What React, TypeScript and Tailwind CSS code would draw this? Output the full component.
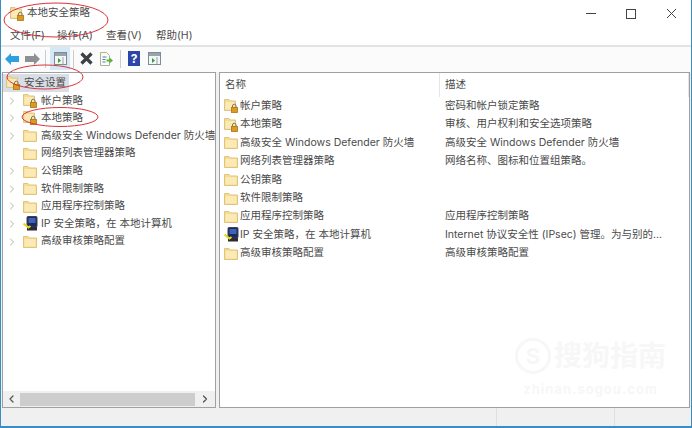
import { ChevronRight, ChevronLeft } from "lucide-react"

interface Item {
  name: string
  desc?: string
  icon: "folder" | "lock" | "ip"
  arrow?: boolean
}

const items: Item[] = [
  { name: "帐户策略", desc: "密码和帐户锁定策略", icon: "lock", arrow: true },
  { name: "本地策略", desc: "审核、用户权利和安全选项策略", icon: "lock", arrow: true },
  { name: "高级安全 Windows Defender 防火墙", desc: "高级安全 Windows Defender 防火墙", icon: "folder", arrow: true },
  { name: "网络列表管理器策略", desc: "网络名称、图标和位置组策略。", icon: "folder" },
  { name: "公钥策略", icon: "folder", arrow: true },
  { name: "软件限制策略", icon: "folder", arrow: true },
  { name: "应用程序控制策略", desc: "应用程序控制策略", icon: "folder", arrow: true },
  { name: "IP 安全策略，在 本地计算机", desc: "Internet 协议安全性 (IPsec) 管理。为与别的...", icon: "ip", arrow: true },
  { name: "高级审核策略配置", desc: "高级审核策略配置", icon: "folder", arrow: true },
]

const font = "font-['Inter','Noto_Sans_CJK_SC',sans-serif]"

function Folder() {
  return (
    <svg width="14" height="13" viewBox="0 0 14 13" className="shrink-0">
      <path d="M0.500 1.500h4.500l1.500 1.500h7v9.500h-13z" fill="#f6dc8e" stroke="#e0c47c" />
      <rect x="1.500" y="4" width="11" height="7.500" fill="#fbeab5" />
    </svg>
  )
}

function LockFolder() {
  return (
    <svg width="15" height="14" viewBox="0 0 15 14" className="shrink-0">
      <path d="M0.500 0.500h4.500l1.500 1.500h5v9.500h-11z" fill="#f6dc8e" stroke="#d9c48a" />
      <rect x="1.500" y="3" width="9" height="7.500" fill="#fbeab5" />
      <path d="M8.500 8.500V7a1.800 1.800 0 0 1 3.600 0v1.500" fill="none" stroke="#7d7660" />
      <rect x="7.500" y="8.500" width="6" height="5" fill="#dd9a1c" stroke="#a8741a" strokeWidth="0.800" />
    </svg>
  )
}

function IpIcon() {
  return (
    <svg width="15" height="15" viewBox="0 0 15 15" className="shrink-0">
      <rect x="4" y="0.500" width="10" height="10.500" rx="1" fill="#1d2a5c" stroke="#3d4356" />
      <rect x="5.500" y="2" width="7" height="5" fill="#3f63b8" />
      <rect x="4" y="11" width="10" height="3.500" fill="#2c2c33" />
      <path d="M0.500 7.500l5 4 2-1.500" fill="none" stroke="#e6d81f" strokeWidth="2" />
    </svg>
  )
}

function ItemIcon({ icon }: { icon: Item["icon"] }) {
  return (
    <div className="flex w-[16px] shrink-0 items-center">
      {icon === "lock" ? <LockFolder /> : icon === "ip" ? <IpIcon /> : <Folder />}
    </div>
  )
}

function ToolDivider({ className }: { className: string }) {
  return <div className={`h-[18px] w-px bg-[#c9cdd1] ${className}`} />
}

function PanelIcon() {
  return (
    <svg width="13" height="13" viewBox="0 0 13 13">
      <rect x="0.500" y="0.500" width="12" height="12" fill="#f4f6f7" stroke="#7f8b93" />
      <rect x="1" y="1" width="11" height="3" fill="#98a4ad" />
      <path d="M9 5v7" stroke="#9aa3a9" />
      <path d="M7 8.500L4 6v5z" fill="#2f9e3f" />
    </svg>
  )
}

function Toolbar() {
  return (
    <div className="flex h-[25px] shrink-0 items-center bg-[#fbfbfb] pb-[2px] pl-[4px]">
      <svg width="14" height="12" viewBox="0 0 14 12">
        <path d="M0 6l6-6v3h8v6H6v3z" fill="#2f9fdf" />
      </svg>
      <svg width="15" height="12" viewBox="0 0 15 12" className="ml-[6px]">
        <path d="M15 6L9 0v3H0v6h9v3z" fill="#8e9194" />
      </svg>
      <ToolDivider className="ml-[5px]" />
      <div className="ml-[4px] flex h-[23px] w-[20px] items-center justify-center bg-[#d6e8f6]">
        <PanelIcon />
      </div>
      <ToolDivider className="ml-[3px]" />
      <svg width="13" height="13" viewBox="0 0 13 13" className="ml-[6px]">
        <path d="M1.500 1.500l10 10M11.500 1.500l-10 10" stroke="#3d4044" strokeWidth="3.200" />
      </svg>
      <svg width="13" height="14" viewBox="0 0 13 14" className="ml-[7px]">
        <path d="M0.500 0.500h6l3 3v10h-9z" fill="#fbfbf3" stroke="#aeb19c" />
        <path d="M2.500 5h4M2.500 7.500h3M2.500 10h3" stroke="#4b7fae" />
        <path d="M13 8.500L9.500 5.500v2H6.500v2h3v2z" fill="#57b33c" />
      </svg>
      <ToolDivider className="ml-[7px]" />
      <div className="ml-[7px] flex h-[15px] w-[12px] items-center justify-center bg-[#2b46a8] text-[12px] font-bold text-white">?</div>
      <div className="ml-[8px] flex">
        <PanelIcon />
      </div>
    </div>
  )
}

function TreePane() {
  return (
    <div className="flex w-[214px] shrink-0 flex-col border border-[#a0a0a0] bg-white">
      <div className="min-h-0 flex-1 overflow-hidden pt-[1px]">
        <div className="flex h-[18px] w-[66px] items-center bg-[#d9dde6] pl-[3px]">
          <LockFolder />
          <span className="ml-[3px] whitespace-nowrap">安全设置</span>
        </div>
        {items.map((item) => (
          <div key={item.name} className="flex h-[17.600px] items-center pl-[4px]">
            <div className="w-[16px] shrink-0">
              {item.arrow && <ChevronRight size={12} strokeWidth={1.500} className="-ml-[1px] text-[#9a9a9a]" />}
            </div>
            <ItemIcon icon={item.icon} />
            <span className="ml-[2px] whitespace-nowrap">{item.name}</span>
          </div>
        ))}
      </div>
      <div className="flex h-[16px] shrink-0 items-center bg-[#f0f0f0]">
        <ChevronLeft size={12} strokeWidth={2.500} className="mx-[2px] w-[13px] text-[#555]" />
        <div className="h-[13px] w-[175px] bg-[#cdcdcd]" />
        <div className="flex flex-1 justify-center">
          <ChevronRight size={12} strokeWidth={2.500} className="text-[#555]" />
        </div>
      </div>
    </div>
  )
}

function ListPane() {
  return (
    <div className="min-w-0 flex-1 border border-[#a0a0a0] bg-white">
      <div className="flex h-[24px] items-center">
        <div className="h-[24px] w-[220px] border-r border-[#e5e5e5] pl-[5px] leading-[24px]">名称</div>
        <div className="h-[24px] w-[249px] border-r border-[#e5e5e5] pl-[5px] leading-[24px]">描述</div>
      </div>
      {items.map((item) => (
        <div key={item.name} className="flex h-[18.400px] items-center">
          <div className="flex w-[220px] items-center pl-[4px]">
            <ItemIcon icon={item.icon} />
            <span className="whitespace-nowrap">{item.name}</span>
          </div>
          <div className="whitespace-nowrap pl-[5px]">{item.desc}</div>
        </div>
      ))}
    </div>
  )
}

export default function App() {
  return (
    <div className={`relative flex h-[428px] w-[692px] flex-col overflow-hidden border-x border-b-2 border-[#3c8cc4] bg-[#f0f0f0] text-[10.500px] leading-none text-[#4a4a4a] ${font}`}>
      <div className="flex h-[27px] shrink-0 items-center justify-between bg-white pl-[9px]">
        <div className="flex items-center gap-[2px] text-[10.500px]">
          <LockFolder />
          <span>本地安全策略</span>
        </div>
        <div className="flex items-center">
          <div className="flex w-[40px] justify-center">
            <div className="h-px w-[10px] bg-[#444]" />
          </div>
          <div className="flex w-[40px] justify-center">
            <div className="h-[10px] w-[10px] border border-[#444]" />
          </div>
          <div className="flex w-[40px] justify-center">
            <svg width="11" height="11" viewBox="0 0 11 11">
              <path d="M1 1l9 9M10 1l-9 9" stroke="#444" />
            </svg>
          </div>
        </div>
      </div>
      <div className="flex h-[18px] shrink-0 items-center bg-white pl-[9px]">
        <span className="w-[47px]">文件(F)</span>
        <span className="w-[49px]">操作(A)</span>
        <span className="w-[50px]">查看(V)</span>
        <span>帮助(H)</span>
      </div>
      <div className="h-[2px] shrink-0 bg-[#e3e3e3]" />
      <Toolbar />
      <div className="flex min-h-0 flex-1 gap-[3px] px-[1px]">
        <TreePane />
        <ListPane />
      </div>
      <div className="flex h-[18px] shrink-0">
        <div className="w-[496px] border-r border-[#e0e0e0]" />
        <div className="w-[118px] border-r border-[#e0e0e0]" />
      </div>

      {/* hand drawn marks and watermark sit over the window */}
      <svg width="692" height="428" className="pointer-events-none absolute -left-px top-0">
        <ellipse cx="56" cy="20" rx="52" ry="17" fill="none" stroke="#d8343a" />
        <ellipse cx="45" cy="77" rx="38" ry="12" fill="none" stroke="#d8343a" />
        <ellipse cx="60" cy="117" rx="38" ry="9.500" fill="none" stroke="#d8343a" />
      </svg>
      <div className="pointer-events-none absolute left-[514px] top-[338px] flex flex-col items-center text-[#f7f7f7]">
        <div className="flex items-center gap-[3px]">
          <div className="flex h-[36px] w-[36px] items-center justify-center rounded-full border-[3px] border-[#f7f7f7] text-[22px] font-bold">S</div>
          <span className="text-[28px] font-bold">搜狗指南</span>
        </div>
        <span className="mt-[9px] text-[13px] font-bold tracking-[1px]">zhinan.sogou.com</span>
      </div>
    </div>
  )
}
